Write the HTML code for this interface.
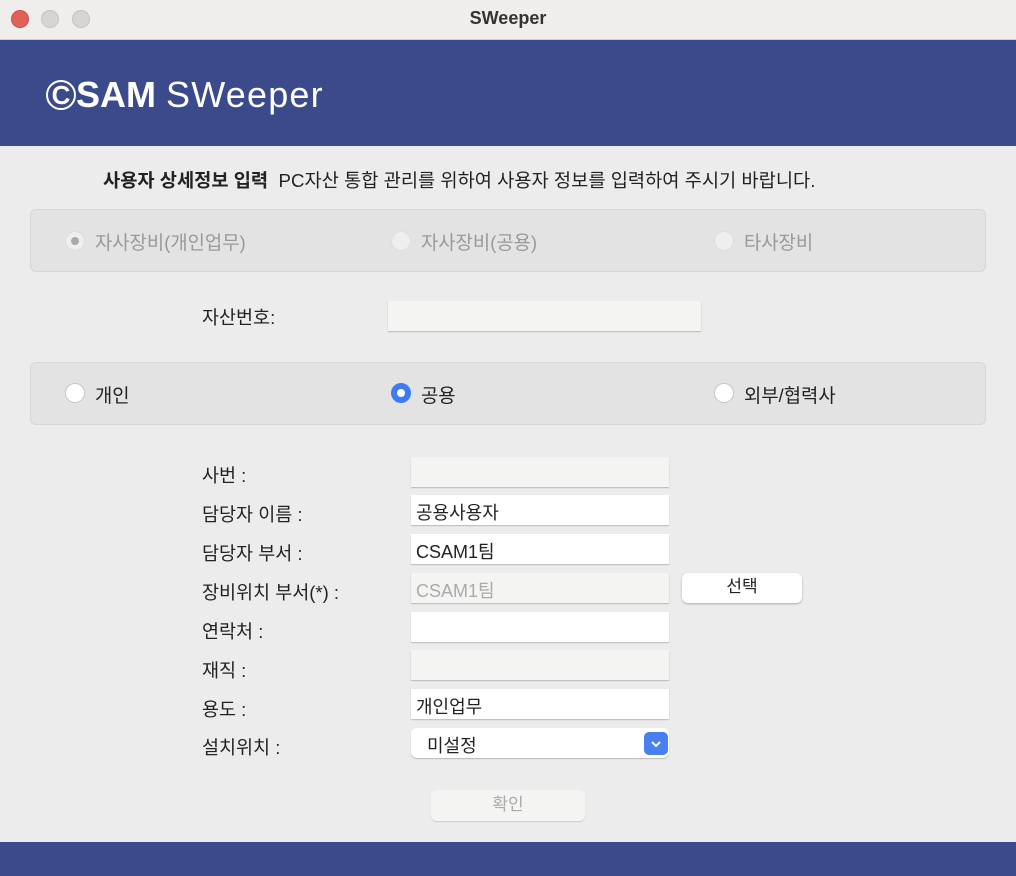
<!DOCTYPE html><html><head><meta charset="utf-8"><style>
*{margin:0;padding:0;box-sizing:border-box}
body{width:1016px;height:876px;background:#ececec;position:relative;overflow:hidden;font-family:"Liberation Sans","Noto Sans CJK KR",sans-serif;color:#222}
.a{position:absolute}
.tb{left:0;top:0;width:1016px;height:40px;background:#efeeec;border-bottom:1px solid #d0d0d0}
.dot{width:18px;height:18px;border-radius:50%;top:10px;background:#d6d5d4;border:1px solid #c4c3c2}
.box{background:#e3e3e3;border:1px solid #d6d6d6;border-radius:6px;left:30px;width:956px}
.rad{width:20px;height:20px;border-radius:50%;background:#fff;border:1px solid #c8c8c8}
.f{left:411px;width:258px;height:30px;background:#fff;box-shadow:0 1px 1px #b8b8b8;font-size:18px;padding:4px 5px}
.f.d{background:#f4f4f3}
.lb{left:202px;font-size:18.5px}
.t{font-size:18.8px}
</style></head><body>
<div class="a tb"></div>
<div class="a dot" style="left:11px;background:#e0605a;border-color:#cf4f48"></div>
<div class="a dot" style="left:41px"></div>
<div class="a dot" style="left:72px"></div>
<div class="a" style="left:0;width:1016px;top:8px;text-align:center;font-weight:bold;font-size:18px;color:#333">SWeeper</div>
<div class="a" style="left:0;top:40px;width:1016px;height:106px;background:#3b4a8a"></div>
<div class="a" style="left:46px;top:74px;color:#fff;font-size:36px;white-space:nowrap"><span style="display:inline-block;width:30px;height:30px;border:2px solid #fff;border-radius:50%;text-align:center;font-size:26px;line-height:26px;font-weight:bold;vertical-align:3px">C</span><b>SAM</b> <span style="font-weight:normal;letter-spacing:1.2px">SWeeper</span></div>
<div class="a" style="left:0;top:842px;width:1016px;height:34px;background:#3b4a8a"></div>
<div class="a" style="left:103px;top:166px;font-size:18.7px"><b>사용자 상세정보 입력</b>&nbsp; PC자산 통합 관리를 위하여 사용자 정보를 입력하여 주시기 바랍니다.</div>
<div class="a box" style="top:209px;height:63px"></div>
<div class="a rad" style="left:65px;top:231px;background:#eee;border-color:#ddd"><div class="a" style="left:5px;top:5px;width:8px;height:8px;border-radius:50%;background:#aaa"></div></div>
<div class="a t" style="left:95px;top:228px;color:#999">자사장비(개인업무)</div>
<div class="a rad" style="left:391px;top:231px;background:#eee;border-color:#ddd"></div>
<div class="a t" style="left:421px;top:228px;color:#999">자사장비(공용)</div>
<div class="a rad" style="left:714px;top:231px;background:#eee;border-color:#ddd"></div>
<div class="a t" style="left:744px;top:228px;color:#999">타사장비</div>
<div class="a lb" style="top:304px">자산번호:</div>
<div class="a f d" style="left:388px;top:301px;width:313px"></div>
<div class="a box" style="top:362px;height:63px"></div>
<div class="a rad" style="left:65px;top:383px"></div>
<div class="a t" style="left:95px;top:381px">개인</div>
<div class="a rad" style="left:391px;top:383px;background:#3d7bf5;border-color:#3d7bf5"><div class="a" style="left:5px;top:5px;width:8px;height:8px;border-radius:50%;background:#fff"></div></div>
<div class="a t" style="left:421px;top:381px">공용</div>
<div class="a rad" style="left:714px;top:383px"></div>
<div class="a t" style="left:744px;top:381px">외부/협력사</div>
<div class="a lb" style="top:462px">사번 :</div><div class="a f d" style="top:457px"></div>
<div class="a lb" style="top:501px">담당자 이름 :</div><div class="a f" style="top:495px">공용사용자</div>
<div class="a lb" style="top:540px">담당자 부서 :</div><div class="a f" style="top:534px">CSAM1팀</div>
<div class="a lb" style="top:579px">장비위치 부서(*) :</div><div class="a f d" style="top:573px;color:#aaa">CSAM1팀</div>
<div class="a" style="left:682px;top:573px;width:120px;height:30px;background:#fff;border-radius:6px;box-shadow:0 1px 2px #aaa;text-align:center;font-size:17px;line-height:28px">선택</div>
<div class="a lb" style="top:618px">연락처 :</div><div class="a f" style="top:612px"></div>
<div class="a lb" style="top:657px">재직 :</div><div class="a f d" style="top:650px"></div>
<div class="a lb" style="top:696px">용도 :</div><div class="a f" style="top:689px">개인업무</div>
<div class="a lb" style="top:734px">설치위치 :</div>
<div class="a f" style="top:728px;border-radius:6px;padding-left:16px">미설정</div>
<div class="a" style="left:644px;top:732px;width:24px;height:23px;border-radius:5px;background:#4a7ff2;color:#fff;text-align:center"><svg width="24" height="23"><path d="M8 10l4 4 4-4" stroke="#fff" stroke-width="2" fill="none"/></svg></div>
<div class="a" style="left:431px;top:790px;width:154px;height:31px;background:#f4f4f3;border-radius:6px;box-shadow:0 1px 1px #ccc;text-align:center;color:#aaa;font-size:17px;line-height:29px">확인</div>
</body></html>
